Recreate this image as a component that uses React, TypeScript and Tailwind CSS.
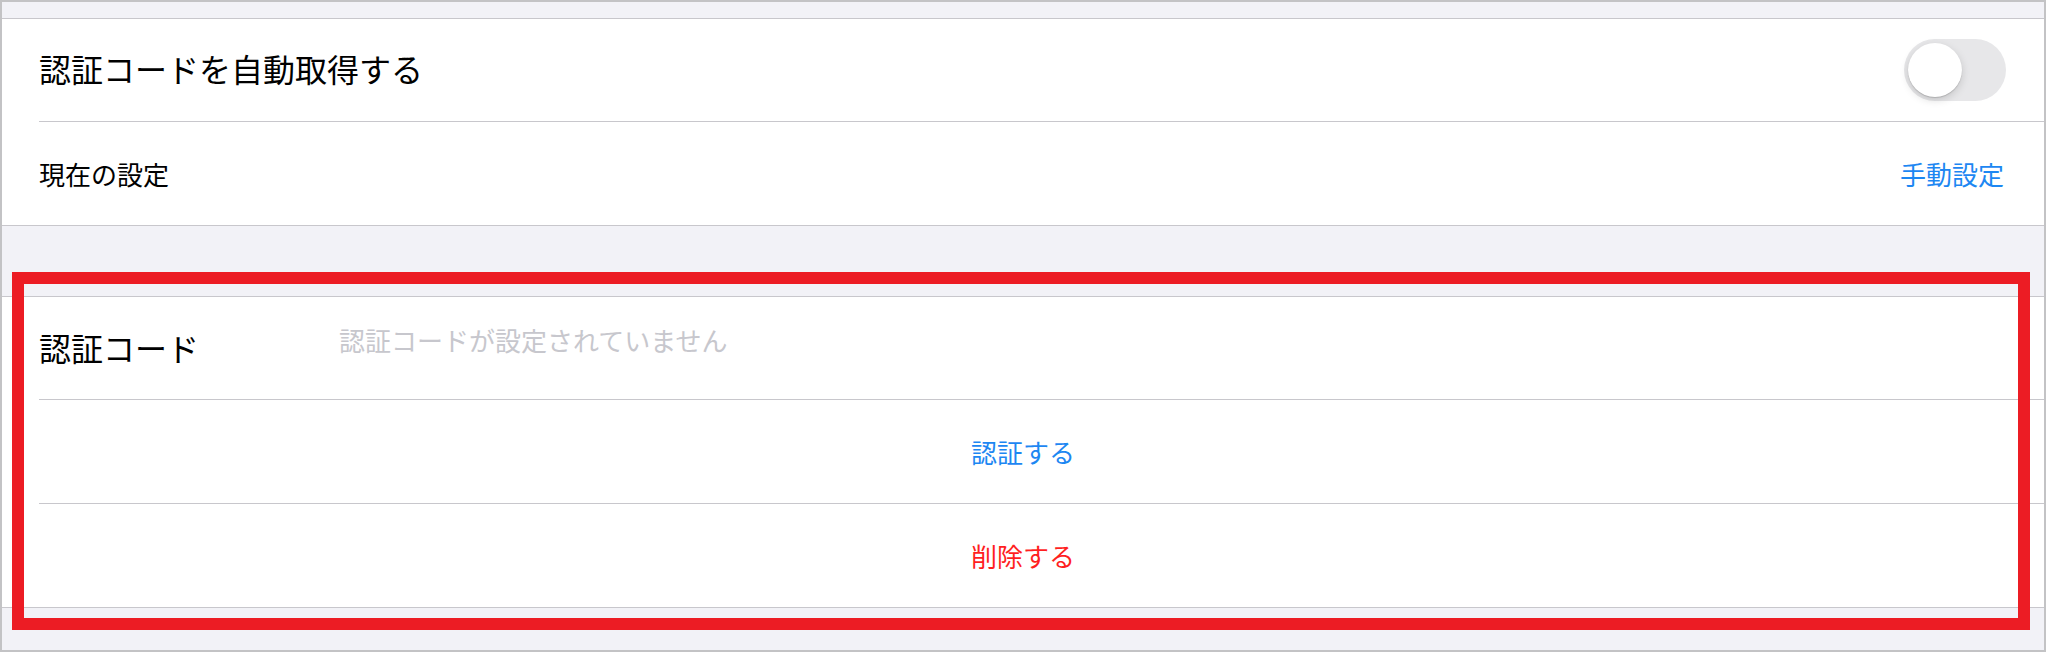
import React from "react";

const font = { fontFamily: '"Noto Sans CJK JP", "Noto Sans", sans-serif' };

function Sep() {
  return <div className="ml-[37px] h-px bg-[#c8c7cc]" />;
}

export default function App() {
  return (
    <div
      className="relative w-[2046px] h-[652px] overflow-hidden border-2 border-[#c3c3c5] bg-[#f2f2f7]"
      style={font}
    >
      <div className="h-[16px]" />
      {/* group 1 */}
      <div className="border-y border-[#c8c7cc] bg-white">
        <div className="flex h-[102px] items-center justify-between pl-[37px] pr-[38px]">
          <span className="mb-[5px] text-[32px] leading-none text-black">認証コードを自動取得する</span>
          <div className="relative h-[62px] w-[102px] rounded-full bg-[#e7e7e9]">
            <div className="absolute left-[4px] top-[4px] h-[54px] w-[54px] rounded-full bg-white shadow-[0_3px_8px_rgba(0,0,0,0.15),0_1px_1px_rgba(0,0,0,0.16)]" />
          </div>
        </div>
        <Sep />
        <div className="flex h-[103px] items-center justify-between pl-[37px] pr-[40px]">
          <span className="text-[26px] leading-none text-black">現在の設定</span>
          <span className="text-[26px] leading-none text-[#1d87f2]">手動設定</span>
        </div>
      </div>
      <div className="h-[70px]" />
      {/* group 2 */}
      <div className="border-y border-[#c8c7cc] bg-white">
        <div className="flex h-[102px] items-center pl-[37px] pr-[38px]">
          <span className="mb-[3px] w-[300px] text-[32px] leading-none text-black">認証コード</span>
          <span className="mb-[16px] text-[26px] leading-none text-[#c7c7cd]">
            認証コードが設定されていません
          </span>
        </div>
        <Sep />
        <div className="flex h-[103px] items-center justify-center">
          <span className="text-[26px] leading-none text-[#1d87f2]">認証する</span>
        </div>
        <Sep />
        <div className="flex h-[103px] items-center justify-center">
          <span className="text-[26px] leading-none text-[#ff1f1f]">削除する</span>
        </div>
      </div>
      {/* annotation box */}
      <div className="pointer-events-none absolute left-[10px] top-[270px] h-[358px] w-[2018px] border-[12px] border-[#ec1c24]" />
    </div>
  );
}
